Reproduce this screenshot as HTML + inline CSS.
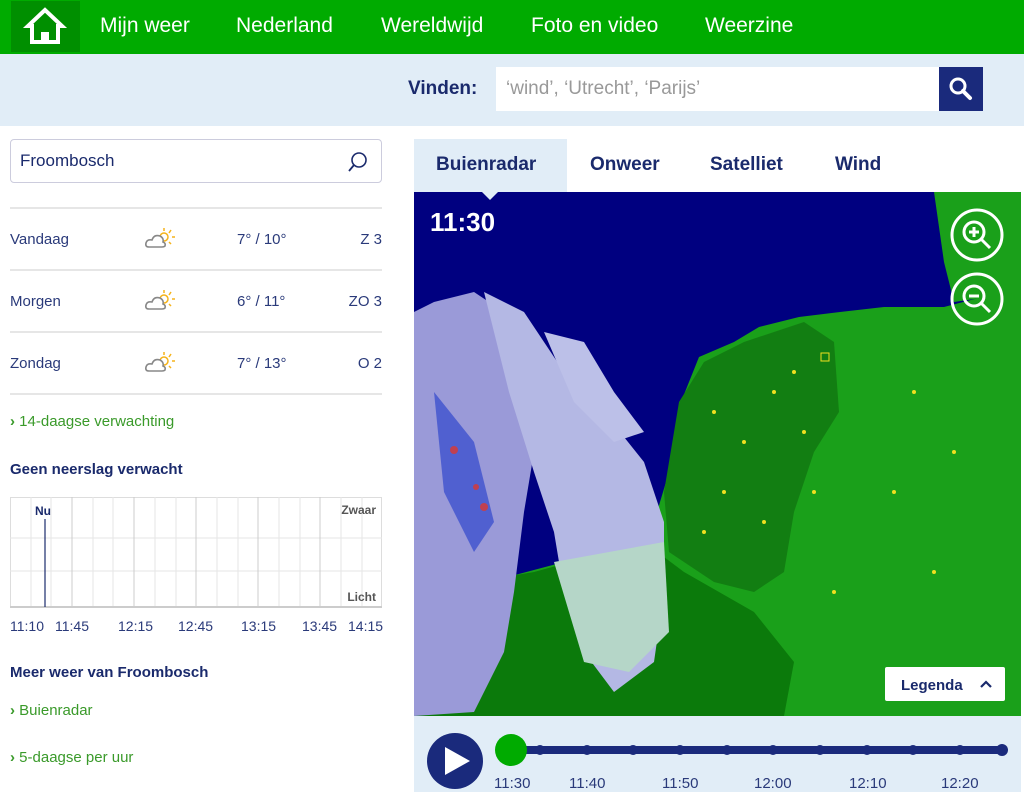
<!DOCTYPE html>
<html><head><meta charset="utf-8"><style>
*{margin:0;padding:0;box-sizing:border-box}
body{width:1024px;height:792px;overflow:hidden;font-family:"Liberation Sans",sans-serif;background:#fff;position:relative;color:#1a2a6c}
.nav{position:absolute;left:0;top:0;width:1024px;height:54px;background:#00ab00}
.home{position:absolute;left:11px;top:1px;width:69px;height:51px;background:#008f00}
.nav a{position:absolute;top:14px;color:#fff;font-size:21px;text-decoration:none}
.band{position:absolute;left:0;top:54px;width:1024px;height:72px;background:#e1edf7}
.abs{position:absolute}
.row{position:absolute;left:10px;width:372px;height:62px;border-top:2px solid #e6e6e6;font-size:15px;color:#2a3a7a}
.row span{position:absolute;top:22px}
.g{color:#3a9a2a;font-size:15px}
</style></head><body>
<div class="nav">
 <div class="home"><svg width="69" height="51" viewBox="0 0 69 51"><path d="M34 9 L17 25 L21 25 L21 41 L47 41 L47 25 L51 25 Z" fill="none" stroke="#fff" stroke-width="4" stroke-linejoin="miter"/><rect x="30" y="31" width="8" height="10" fill="#fff"/></svg></div>
 <a style="left:100px">Mijn weer</a><a style="left:236px">Nederland</a><a style="left:381px">Wereldwijd</a><a style="left:531px">Foto en video</a><a style="left:705px">Weerzine</a>
</div>
<div class="band">
 <div class="abs" style="left:408px;top:24px;font-size:19px;font-weight:bold;color:#1a2a6c">Vinden:</div>
 <div class="abs" style="left:496px;top:13px;width:444px;height:44px;background:#fff;font-size:19px;color:#999;padding:11px 10px">‘wind’, ‘Utrecht’, ‘Parijs’</div>
 <div class="abs" style="left:939px;top:13px;width:44px;height:44px;background:#1a2a7c"><svg width="44" height="44"><circle cx="19" cy="19" r="7" fill="none" stroke="#fff" stroke-width="3"/><path d="M24 24 L31 31" stroke="#fff" stroke-width="4" stroke-linecap="round"/></svg></div>
</div>
<div class="abs" style="left:10px;top:139px;width:372px;height:44px;border:1px solid #ccd;border-radius:4px;font-size:17px;padding:11px 9px;color:#1a2a6c">Froombosch
 <svg class="abs" style="left:336px;top:11px" width="22" height="22"><circle cx="12" cy="9" r="7" fill="none" stroke="#1a2a6c" stroke-width="1.6"/><path d="M7 14 L2 20" stroke="#1a2a6c" stroke-width="1.8"/></svg></div>
<div class="row" style="top:207px"><span style="left:0">Vandaag</span><span style="left:227px">7° / 10°</span><span style="right:0">Z 3</span></div>
<div class="row" style="top:269px"><span style="left:0">Morgen</span><span style="left:227px">6° / 11°</span><span style="right:0">ZO 3</span></div>
<div class="row" style="top:331px"><span style="left:0">Zondag</span><span style="left:227px">7° / 13°</span><span style="right:0">O 2</span></div>
<div class="abs" style="left:10px;top:393px;width:372px;border-top:2px solid #e6e6e6"></div>
<svg class="abs" style="left:144px;top:226px" width="34" height="24"><g stroke="#f5b31a" stroke-width="1.5"><line x1="20" y1="2" x2="20" y2="5"/><line x1="27" y1="4" x2="25" y2="7"/><line x1="31" y1="11" x2="28" y2="11"/><line x1="27" y1="18" x2="25" y2="16"/><circle cx="20" cy="11" r="4" fill="none"/></g><path d="M5 21 Q1 21 2 17 Q3 13 8 14 Q10 8 16 10 Q20 12 19 16 Q22 17 21 20 Q20 21 18 21 Z" fill="#fff" stroke="#888" stroke-width="1.6"/></svg>
<svg class="abs" style="left:144px;top:288px" width="34" height="24"><g stroke="#f5b31a" stroke-width="1.5"><line x1="20" y1="2" x2="20" y2="5"/><line x1="27" y1="4" x2="25" y2="7"/><line x1="31" y1="11" x2="28" y2="11"/><line x1="27" y1="18" x2="25" y2="16"/><circle cx="20" cy="11" r="4" fill="none"/></g><path d="M5 21 Q1 21 2 17 Q3 13 8 14 Q10 8 16 10 Q20 12 19 16 Q22 17 21 20 Q20 21 18 21 Z" fill="#fff" stroke="#888" stroke-width="1.6"/></svg>
<svg class="abs" style="left:144px;top:350px" width="34" height="24"><g stroke="#f5b31a" stroke-width="1.5"><line x1="20" y1="2" x2="20" y2="5"/><line x1="27" y1="4" x2="25" y2="7"/><line x1="31" y1="11" x2="28" y2="11"/><line x1="27" y1="18" x2="25" y2="16"/><circle cx="20" cy="11" r="4" fill="none"/></g><path d="M5 21 Q1 21 2 17 Q3 13 8 14 Q10 8 16 10 Q20 12 19 16 Q22 17 21 20 Q20 21 18 21 Z" fill="#fff" stroke="#888" stroke-width="1.6"/></svg>
<div class="abs g" style="left:10px;top:413px"><b>›</b> 14-daagse verwachting</div>
<div class="abs" style="left:10px;top:461px;font-size:15px;font-weight:bold">Geen neerslag verwacht</div>
<svg class="abs" style="left:10px;top:497px" width="372" height="112">
 <rect x="0.5" y="0.5" width="371" height="110" fill="#fff" stroke="#ddd"/>
 <g stroke="#e6e6e6"><line x1="0" y1="41" x2="372" y2="41"/><line x1="0" y1="74" x2="372" y2="74"/>
 <path d="M21 0V110M41 0V110M62 0V110M83 0V110M103 0V110M124 0V110M145 0V110M166 0V110M186 0V110M207 0V110M228 0V110M248 0V110M269 0V110M290 0V110M310 0V110M331 0V110M352 0V110"/></g>
 <g stroke="#ccc"><path d="M62 0V110M124 0V110M186 0V110M248 0V110M310 0V110"/></g>
 <line x1="0" y1="110" x2="372" y2="110" stroke="#ccc" stroke-width="2"/>
 <line x1="35" y1="22" x2="35" y2="110" stroke="#1a2a6c" stroke-width="1.2"/>
 <text x="25" y="18" font-size="12" font-weight="bold" fill="#1a2a6c" font-family="Liberation Sans">Nu</text>
 <text x="366" y="17" text-anchor="end" font-size="12" font-weight="bold" fill="#555" font-family="Liberation Sans">Zwaar</text>
 <text x="366" y="104" text-anchor="end" font-size="12" font-weight="bold" fill="#555" font-family="Liberation Sans">Licht</text>
</svg>
<div class="abs" style="left:10px;top:618px;font-size:14px;color:#2a3a7a;width:372px">
<span class="abs" style="left:0">11:10</span><span class="abs" style="left:45px">11:45</span><span class="abs" style="left:108px">12:15</span><span class="abs" style="left:168px">12:45</span><span class="abs" style="left:231px">13:15</span><span class="abs" style="left:292px">13:45</span><span class="abs" style="left:338px">14:15</span></div>
<div class="abs" style="left:10px;top:664px;font-size:15px;font-weight:bold">Meer weer van Froombosch</div>
<div class="abs g" style="left:10px;top:702px"><b>›</b> Buienradar</div>
<div class="abs g" style="left:10px;top:749px"><b>›</b> 5-daagse per uur</div>

<div class="abs" style="left:414px;top:139px;width:153px;height:53px;background:#e1edf7"></div>
<div class="abs" style="left:436px;top:154px;font-size:19px;font-weight:bold">Buienradar</div>
<div class="abs" style="left:590px;top:154px;font-size:19px;font-weight:bold">Onweer</div>
<div class="abs" style="left:710px;top:154px;font-size:19px;font-weight:bold">Satelliet</div>
<div class="abs" style="left:835px;top:154px;font-size:19px;font-weight:bold">Wind</div>
<svg class="abs" style="left:414px;top:192px" width="607" height="524">
 <rect width="607" height="524" fill="#000080"/>
 <path d="M0 410 L150 370 L210 345 L240 330 L255 280 L265 215 L285 165 L320 150 L345 135 L385 125 L426 120 L470 115 L530 115 L607 95 L607 524 L0 524Z" fill="#1aa01a"/>
 <path d="M520 0 L607 0 L607 100 L540 110 L530 70 Z" fill="#1aa01a"/>
 <path d="M265 210 L290 170 L330 150 L390 130 L420 150 L425 220 L400 260 L380 320 L370 380 L340 400 L300 390 L255 360 L250 300Z" fill="#127e12"/>
 <path d="M0 400 L120 380 L230 350 L270 380 L340 420 L380 470 L370 524 L0 524Z" fill="#0b7a0b"/>
 <path d="M0 120 L20 110 L60 100 L90 120 L100 200 L120 260 L110 320 L100 400 L90 460 L60 520 L0 524Z" fill="#9a9ad8"/>
 <path d="M70 100 L110 120 L150 180 L190 220 L230 270 L250 330 L250 400 L240 470 L200 500 L170 460 L150 400 L140 340 L120 280 L95 200Z" fill="#b4b8e4"/>
 <path d="M130 140 L170 150 L200 200 L230 240 L200 250 L160 210Z" fill="#bcc0e8"/>
 <path d="M140 370 L250 350 L255 440 L215 480 L170 470Z" fill="#b5d6c8"/>
 <path d="M20 200 L60 250 L80 330 L60 360 L30 300Z" fill="#5060d0"/>
 <circle cx="40" cy="258" r="4" fill="#c04050"/><circle cx="70" cy="315" r="4" fill="#c04050"/><circle cx="62" cy="295" r="3" fill="#c04050"/>
 <g fill="#f0e020"><circle cx="300" cy="220" r="2"/><circle cx="330" cy="250" r="2"/><circle cx="360" cy="200" r="2"/><circle cx="380" cy="180" r="2"/><circle cx="310" cy="300" r="2"/><circle cx="350" cy="330" r="2"/><circle cx="400" cy="300" r="2"/><circle cx="390" cy="240" r="2"/><circle cx="290" cy="340" r="2"/><circle cx="420" cy="400" r="2"/><circle cx="480" cy="300" r="2"/><circle cx="540" cy="260" r="2"/><circle cx="500" cy="200" r="2"/><circle cx="520" cy="380" r="2"/></g>
 <rect x="407" y="161" width="8" height="8" fill="none" stroke="#f0e020"/>
 <g fill="none" stroke="#fff" stroke-width="3"><circle cx="563" cy="43" r="25"/><circle cx="563" cy="107" r="25"/>
 <circle cx="560" cy="40" r="10"/><circle cx="560" cy="104" r="10"/><path d="M567 47L576 56M567 111L576 120M555 40H565M560 35V45M555 104H565"/></g>
 <text x="16" y="39" font-size="26" font-weight="bold" fill="#fff" font-family="Liberation Sans">11:30</text>
 <rect x="471" y="475" width="120" height="34" rx="2" fill="#fff"/>
 <text x="487" y="498" font-size="15" font-weight="bold" fill="#1a2a6c" font-family="Liberation Sans">Legenda</text>
 <path d="M567 495L572 490L577 495" fill="none" stroke="#1a2a6c" stroke-width="2.2"/>
 <path d="M68 0L76 8L84 0Z" fill="#e1edf7"/>
</svg>
<div class="abs" style="left:414px;top:716px;width:607px;height:76px;background:#e1edf7"></div>
<svg class="abs" style="left:414px;top:716px" width="607" height="76">
 <circle cx="41" cy="45" r="28" fill="#1a2a7c"/><path d="M31 31L56 45L31 59Z" fill="#fff"/>
 <line x1="97" y1="34" x2="588" y2="34" stroke="#1a2a7c" stroke-width="8" stroke-linecap="round"/>
 <g fill="#1a2a7c"><circle cx="126" cy="34" r="5"/><circle cx="173" cy="34" r="5"/><circle cx="219" cy="34" r="5"/><circle cx="266" cy="34" r="5"/><circle cx="313" cy="34" r="5"/><circle cx="359" cy="34" r="5"/><circle cx="406" cy="34" r="5"/><circle cx="453" cy="34" r="5"/><circle cx="499" cy="34" r="5"/><circle cx="546" cy="34" r="5"/><circle cx="588" cy="34" r="6"/></g>
 <circle cx="97" cy="34" r="16" fill="#00ab00"/>
 <g font-size="15" fill="#2a3a7a" font-family="Liberation Sans"><text x="80" y="72">11:30</text><text x="155" y="72">11:40</text><text x="248" y="72">11:50</text><text x="340" y="72">12:00</text><text x="435" y="72">12:10</text><text x="527" y="72">12:20</text></g>
</svg>
</body></html>
